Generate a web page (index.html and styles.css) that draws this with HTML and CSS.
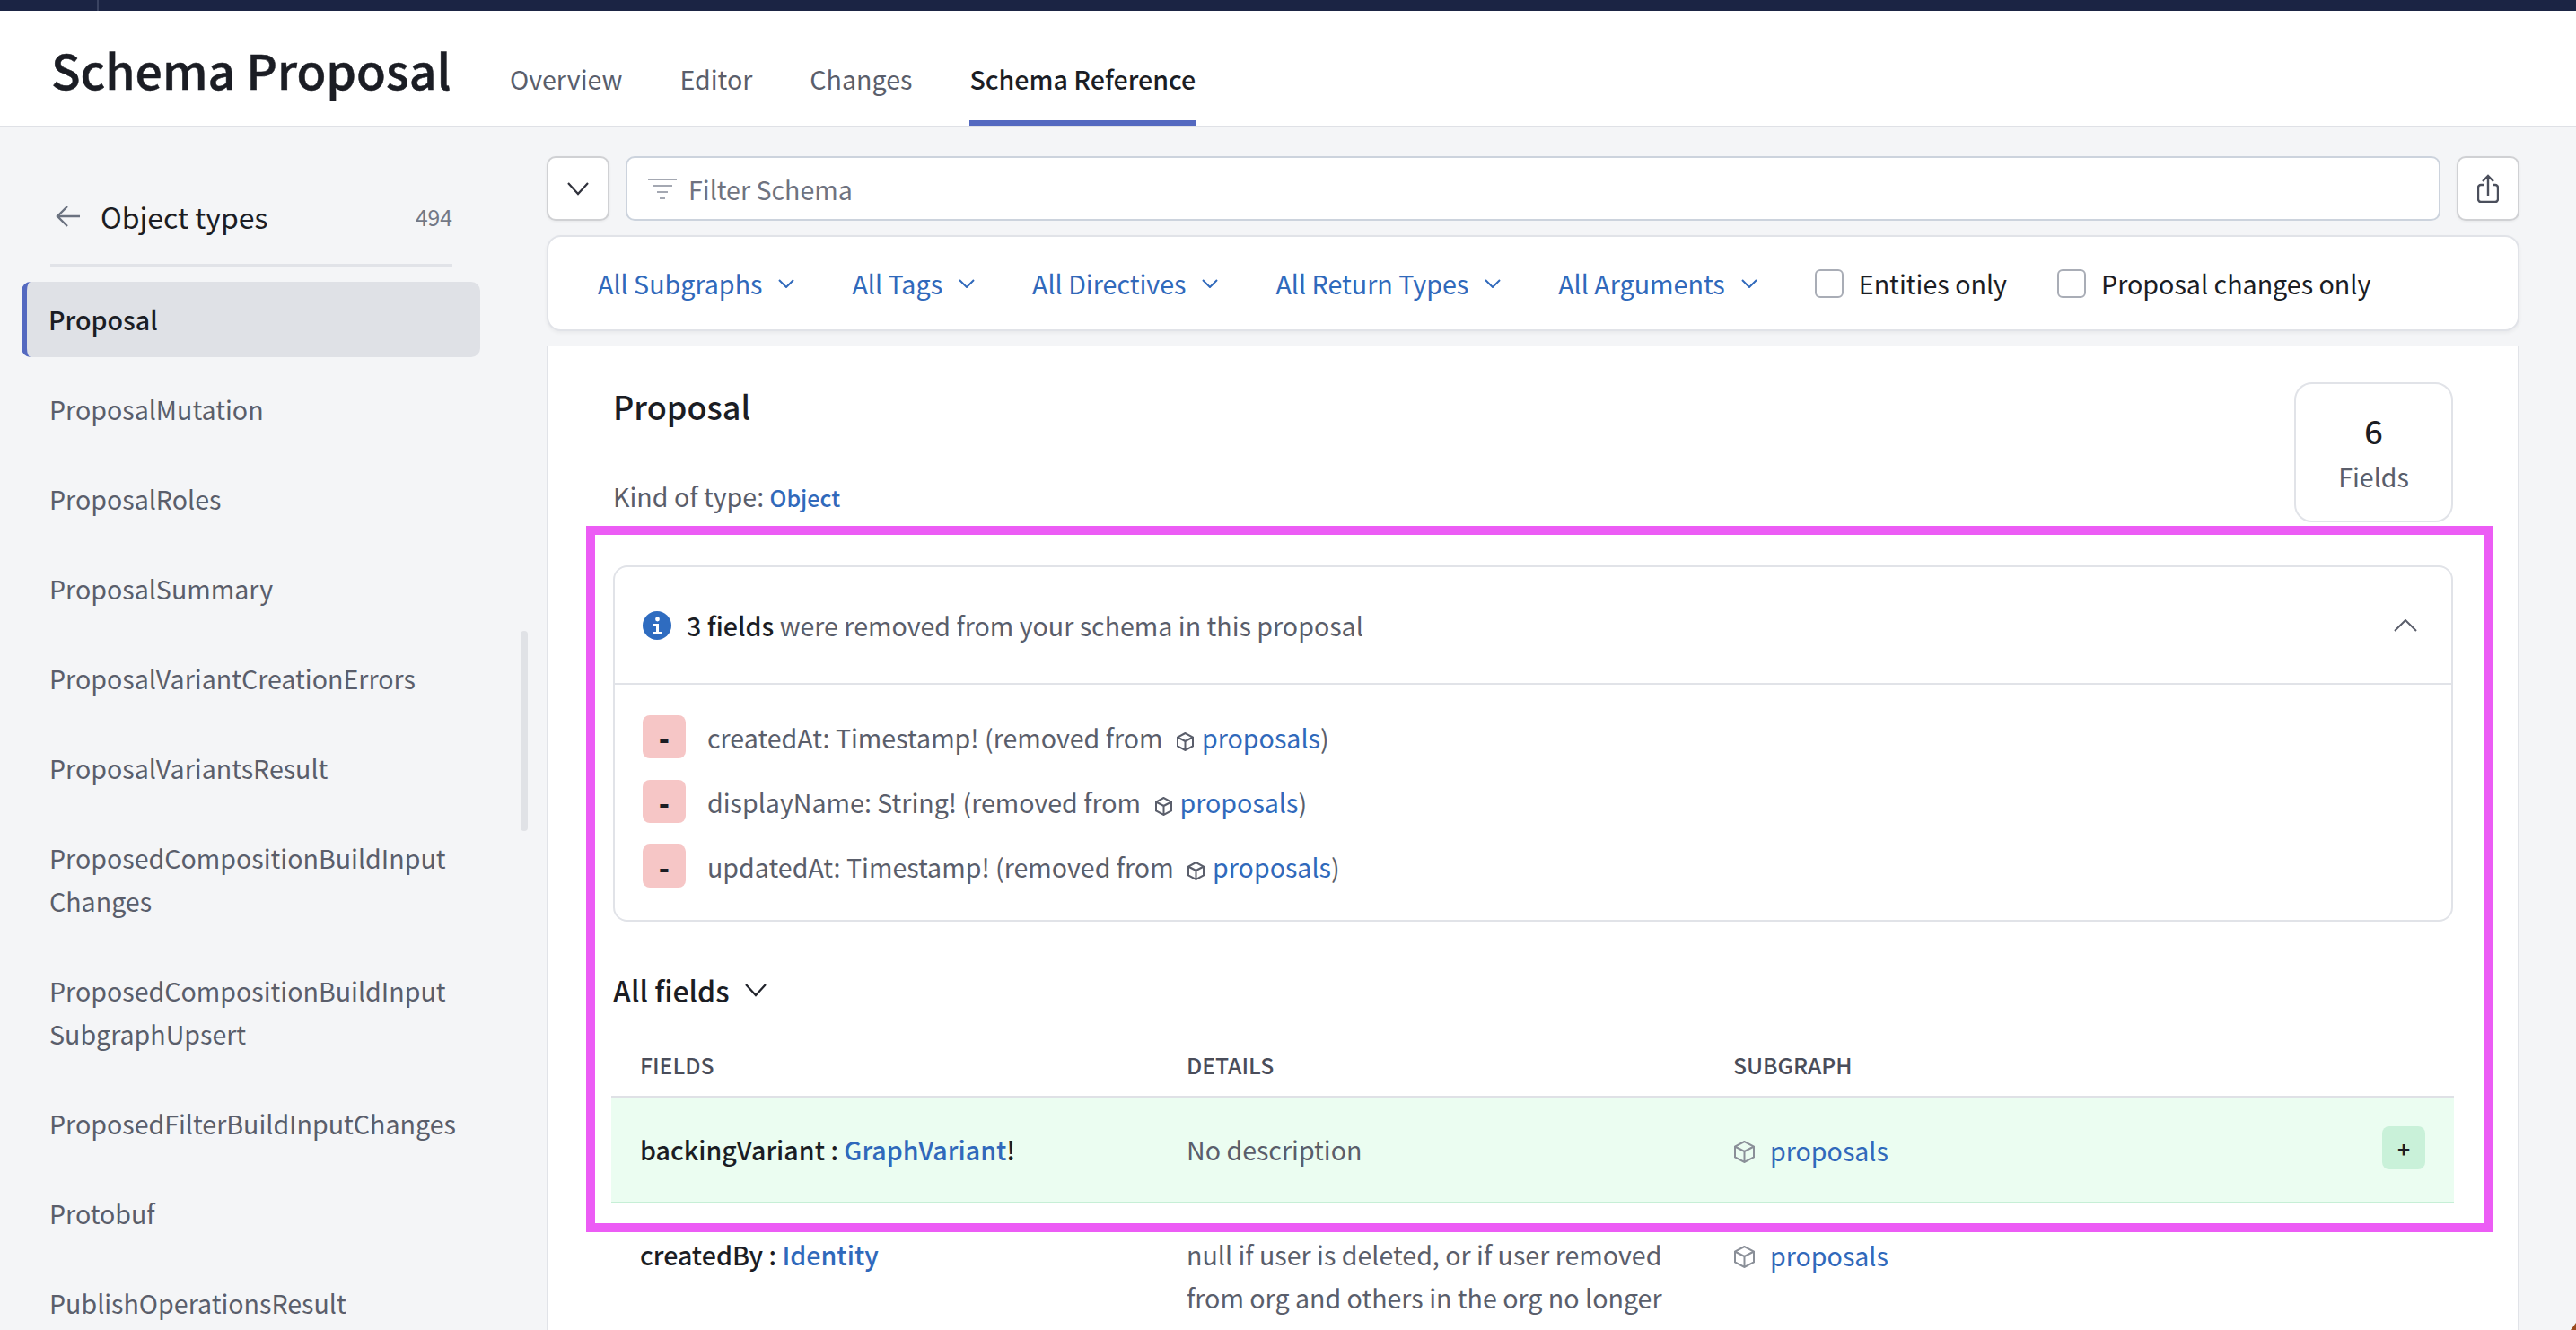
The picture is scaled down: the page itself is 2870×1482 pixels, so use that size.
FILE: index.html

```html
<!DOCTYPE html>
<html lang="en">
<head>
  <meta charset="UTF-8">
  <title>Schema Proposal</title>
  <link rel="stylesheet" href="styles.css">
</head>
<body>
<div class="top-bar"><span class="top-bar-line"></span></div>

<header class="page-header">
  <h1 class="page-title">Schema Proposal</h1>
  <nav class="tabs">
    <a class="tab">Overview</a>
    <a class="tab">Editor</a>
    <a class="tab">Changes</a>
    <a class="tab tab-active">Schema Reference</a>
  </nav>
</header>

<div class="page-body">
  <aside class="sidebar">
    <div class="sidebar-head">
      <svg class="back-arrow" viewBox="0 0 28 26" fill="none" stroke="#6b7280" stroke-width="2.4"><path d="M27 13H2M13 2 2 13l11 11"/></svg>
      <span class="sidebar-title">Object types</span>
      <span class="sidebar-count">494</span>
    </div>
    <ul class="type-list">
      <li class="type-item type-item-active">Proposal</li>
      <li class="type-item">ProposalMutation</li>
      <li class="type-item">ProposalRoles</li>
      <li class="type-item">ProposalSummary</li>
      <li class="type-item">ProposalVariantCreationErrors</li>
      <li class="type-item">ProposalVariantsResult</li>
      <li class="type-item">ProposedCompositionBuildInput<br>Changes</li>
      <li class="type-item">ProposedCompositionBuildInput<br>SubgraphUpsert</li>
      <li class="type-item">ProposedFilterBuildInputChanges</li>
      <li class="type-item">Protobuf</li>
      <li class="type-item">PublishOperationsResult</li>
    </ul>
    <div class="sidebar-scroll"></div>
  </aside>

  <main class="main">
    <div class="search-row">
      <button class="icon-btn">
        <svg width="26" height="16" viewBox="0 0 26 16" fill="none" stroke="#30323c" stroke-width="2.2"><path d="m2 2 11 12L24 2"/></svg>
      </button>
      <div class="search-box">
        <svg width="34" height="26" viewBox="0 0 34 26" fill="none" stroke="#a4a8b2" stroke-width="2.2"><path d="M1 3h32M6 10h22M11 17h12M14 24h6"/></svg>
        <span>Filter Schema</span>
      </div>
      <button class="icon-btn">
        <svg width="24" height="32" viewBox="0 0 24 32" fill="none" stroke="#4b4f5c" stroke-width="2.4"><path d="M12 24V2M6 8l6-6 6 6M7 12H4a3 3 0 0 0-3 3v13a3 3 0 0 0 3 3h16a3 3 0 0 0 3-3V15a3 3 0 0 0-3-3h-3"/></svg>
      </button>
    </div>

    <div class="filter-card">
      <a class="filter">All Subgraphs <svg class="chev" viewBox="0 0 18 10" fill="none" stroke="#3069bb" stroke-width="2"><path d="m1 1 8 8 8-8"/></svg></a>
      <a class="filter">All Tags <svg class="chev" viewBox="0 0 18 10" fill="none" stroke="#3069bb" stroke-width="2"><path d="m1 1 8 8 8-8"/></svg></a>
      <a class="filter">All Directives <svg class="chev" viewBox="0 0 18 10" fill="none" stroke="#3069bb" stroke-width="2"><path d="m1 1 8 8 8-8"/></svg></a>
      <a class="filter">All Return Types <svg class="chev" viewBox="0 0 18 10" fill="none" stroke="#3069bb" stroke-width="2"><path d="m1 1 8 8 8-8"/></svg></a>
      <a class="filter">All Arguments <svg class="chev" viewBox="0 0 18 10" fill="none" stroke="#3069bb" stroke-width="2"><path d="m1 1 8 8 8-8"/></svg></a>
      <label class="check"><span class="check-box"></span>Entities only</label>
      <label class="check"><span class="check-box"></span>Proposal changes only</label>
    </div>

    <section class="content-card">
      <div class="type-head">
        <div>
          <h2 class="type-name">Proposal</h2>
          <p class="type-kind">Kind of type: <a class="type-kind-link">Object</a></p>
        </div>
        <div class="stat-box">
          <strong class="stat-num">6</strong>
          <span class="stat-label">Fields</span>
        </div>
      </div>

      <div class="notice">
        <div class="notice-head">
          <svg class="info-icon" viewBox="0 0 32 32"><circle cx="16" cy="16" r="16" fill="#2f6cc0"/><circle cx="16.500" cy="9" r="2.400" fill="#fff"/><path d="M12 14h6v9h3v2.500H11V23h4v-6.500h-3z" fill="#fff"/></svg>
          <span class="notice-text"><b>3 fields</b> were removed from your schema in this proposal</span>
          <svg class="notice-toggle" viewBox="0 0 26 14" fill="none" stroke="#5a5e6b" stroke-width="2"><path d="M1 13 13 1l12 12"/></svg>
        </div>
        <ul class="removed-list">
          <li class="removed-row"><span class="minus-badge">-</span><span>createdAt: Timestamp! (removed from <svg class="cube" viewBox="0 0 21 21" fill="none" stroke="#5a5e6b" stroke-width="2"><path d="M10.500 1 2 5.500v10l8.500 4.500 8.500-4.500v-10zM2 5.500l8.500 4.500 8.500-4.500M10.500 10v10"/></svg><a class="sub-link">proposals</a>)</span></li>
          <li class="removed-row"><span class="minus-badge">-</span><span>displayName: String! (removed from <svg class="cube" viewBox="0 0 21 21" fill="none" stroke="#5a5e6b" stroke-width="2"><path d="M10.500 1 2 5.500v10l8.500 4.500 8.500-4.500v-10zM2 5.500l8.500 4.500 8.500-4.500M10.500 10v10"/></svg><a class="sub-link">proposals</a>)</span></li>
          <li class="removed-row"><span class="minus-badge">-</span><span>updatedAt: Timestamp! (removed from <svg class="cube" viewBox="0 0 21 21" fill="none" stroke="#5a5e6b" stroke-width="2"><path d="M10.500 1 2 5.500v10l8.500 4.500 8.500-4.500v-10zM2 5.500l8.500 4.500 8.500-4.500M10.500 10v10"/></svg><a class="sub-link">proposals</a>)</span></li>
        </ul>
      </div>

      <div class="all-fields">All fields
        <svg width="26" height="16" viewBox="0 0 26 16" fill="none" stroke="#22242c" stroke-width="2.200"><path d="m2 2 11 12L24 2"/></svg>
      </div>

      <div class="field-table">
        <div class="field-row field-head">
          <div>FIELDS</div>
          <div>DETAILS</div>
          <div>SUBGRAPH</div>
        </div>
        <div class="field-row field-added">
          <div class="field-name">backingVariant : <a class="sub-link">GraphVariant</a>!</div>
          <div class="field-detail">No description</div>
          <div class="field-sub"><svg class="cube-lg" viewBox="0 0 25 25" fill="none" stroke="#8a8f98" stroke-width="2"><path d="M12.500 1 2 6.500v12L12.500 24 23 18.500v-12zM2 6.500 12.500 12 23 6.500M12.500 12v12"/></svg><a class="sub-link">proposals</a></div>
          <span class="plus-badge">+</span>
        </div>
        <div class="field-row">
          <div class="field-name">createdBy : <a class="sub-link">Identity</a></div>
          <div class="field-detail">null if user is deleted, or if user removed from org and others in the org no longer have access to this graph info</div>
          <div class="field-sub"><svg class="cube-lg" viewBox="0 0 25 25" fill="none" stroke="#8a8f98" stroke-width="2"><path d="M12.500 1 2 6.500v12L12.500 24 23 18.500v-12zM2 6.500 12.500 12 23 6.500M12.500 12v12"/></svg><a class="sub-link">proposals</a></div>
        </div>
      </div>
    </section>
  </main>
</div>

<div class="highlight"></div>
<div class="corner-mark"></div>
</body>
</html>
```

FILE: styles.css

```css
html, body {
  margin: 0;
  padding: 0;
  height: 100%;
  overflow: hidden;
  background: #f4f5f7;
  color: #1b1d24;
  font-family: 'Noto Sans CJK JP', 'Open Sans', sans-serif;
  font-size: 28.6px;
}
ul {
  list-style: none;
  margin: 0;
  padding: 0;
}
h1, h2, p {
  margin: 0;
}
a {
  color: inherit;
}

.top-bar {
  height: 12px;
  background: #1b2444;
}
.top-bar-line {
  display: block;
  width: 2px;
  height: 12px;
  margin-left: 108px;
  background: #3a4361;
}

.page-header {
  display: flex;
  align-items: stretch;
  height: 128px;
  padding-left: 57px;
  background: #fff;
  border-bottom: 2px solid #dfe1e6;
}
.page-title {
  flex: none;
  width: 511px;
  padding-top: 2px;
  font-size: 53.6px;
  font-weight: 500;
  line-height: 126px;
  white-space: nowrap;
  -webkit-text-stroke: 0.5px #1b1d24;
}
.tabs {
  display: flex;
  gap: 64px;
}
.tab {
  height: 128px;
  box-sizing: border-box;
  padding-top: 24px;
  color: #5a5e6b;
  line-height: 104px;
  white-space: nowrap;
}
.tab-active {
  color: #1b1d24;
  font-weight: 500;
  border-bottom: 6px solid #5469c0;
  border-radius: 6px 6px 0 0;
}

.page-body {
  display: flex;
}

.sidebar {
  position: relative;
  width: 609px;
  flex: none;
  padding-top: 32px;
  box-sizing: border-box;
}
.sidebar-head {
  display: flex;
  align-items: center;
  height: 124px;
  margin: 0 105px 16px 56px;
  padding-top: 14px;
  border-bottom: 4px solid #e1e3e8;
  box-sizing: border-box;
}
.back-arrow {
  width: 28px;
  height: 26px;
  margin: 0 22px 0 6px;
}
.sidebar-title {
  font-size: 32px;
  flex: 1;
}
.sidebar-count {
  color: #737886;
  font-size: 24.7px;
}
.type-list {
  display: flex;
  flex-direction: column;
  gap: 16px;
  width: 511px;
  margin-left: 24px;
}
.type-item {
  padding: 18px 10px 18px 31px;
  color: #5a5e6b;
  line-height: 48px;
  white-space: nowrap;
}
.type-item-active {
  padding-left: 24px;
  color: #1b1d24;
  font-weight: 500;
  background: #dfe1e6;
  border-left: 6px solid #5469c0;
  border-radius: 10px;
}
.sidebar-scroll {
  position: absolute;
  top: 561px;
  left: 580px;
  width: 8px;
  height: 223px;
  background: #e0e2e6;
  border-radius: 4px;
}

.main {
  width: 2198px;
  flex: none;
  padding-top: 32px;
}
.search-row {
  display: flex;
  gap: 18px;
  height: 72px;
}
.icon-btn {
  display: flex;
  align-items: center;
  justify-content: center;
  width: 70px;
  flex: none;
  padding: 0;
  background: #fff;
  border: 2px solid #d0d1d4;
  border-radius: 10px;
  box-shadow: 0 1px 3px rgba(0,0,0,0.06);
}
.search-box {
  display: flex;
  align-items: center;
  gap: 12px;
  flex: 1;
  padding: 0 22px;
  color: #6f7380;
  background: #fff;
  border: 2px solid #ccd3dd;
  border-radius: 10px;
}
.filter-card {
  display: flex;
  align-items: center;
  height: 107px;
  margin-top: 16px;
  padding-left: 55px;
  box-sizing: border-box;
  font-size: 28.65px;
  background: #fff;
  border: 2px solid #e1e3e8;
  border-radius: 16px;
  box-shadow: 0 2px 4px rgba(0,0,0,0.05);
}
.filter {
  display: flex;
  align-items: center;
  gap: 18px;
  margin-right: 64px;
  color: #3069bb;
  white-space: nowrap;
}
.chev {
  width: 18px;
  height: 10px;
}
.check {
  display: flex;
  align-items: center;
  gap: 17px;
  margin-right: 56px;
  white-space: nowrap;
}
.check-box {
  width: 32px;
  height: 32px;
  box-sizing: border-box;
  background: #fff;
  border: 2px solid #a9adb6;
  border-radius: 6px;
}

.content-card {
  height: 1100px;
  margin-top: 17px;
  padding: 40px 72px 0 72px;
  background: #fff;
  border-left: 2px solid #e1e3e8;
  border-right: 2px solid #e1e3e8;
}
.type-head {
  display: flex;
  justify-content: space-between;
  height: 204px;
}
.type-name {
  margin-top: 2px;
  font-size: 36px;
  font-weight: 500;
  line-height: 48px;
}
.type-kind {
  margin-top: 55px;
  color: #5a5e6b;
  line-height: 44px;
}
.type-kind-link {
  color: #3069bb;
  font-size: 25px;
  font-weight: 500;
}
.stat-box {
  display: flex;
  flex-direction: column;
  align-items: center;
  width: 177px;
  height: 156px;
  box-sizing: border-box;
  padding-top: 27px;
  border: 2px solid #e1e3e8;
  border-radius: 20px;
}
.stat-num {
  font-size: 36px;
  font-weight: 500;
  line-height: 48px;
}
.stat-label {
  margin-top: 6px;
  color: #5a5e6b;
  line-height: 44px;
}

.notice {
  height: 397px;
  box-sizing: border-box;
  border: 2px solid #e1e3e8;
  border-radius: 16px;
}
.notice-head {
  display: flex;
  align-items: center;
  height: 129px;
  padding: 0 31px;
  border-bottom: 2px solid #e1e3e8;
}
.info-icon {
  width: 32px;
  height: 32px;
  margin-right: 17px;
}
.notice-text {
  flex: 1;
  color: #5a5e6b;
}
.notice-text b {
  color: #1b1d24;
  font-weight: 500;
}
.notice-toggle {
  width: 26px;
  height: 14px;
  margin-right: 7px;
}
.removed-list {
  display: flex;
  flex-direction: column;
  gap: 24px;
  padding: 34px 31px 0;
}
.removed-row {
  display: flex;
  align-items: center;
  gap: 24px;
  height: 48px;
  color: #5a5e6b;
}
.minus-badge {
  display: flex;
  align-items: center;
  justify-content: center;
  width: 48px;
  height: 48px;
  color: #1b1d24;
  font-size: 32px;
  font-weight: 900;
  background: #f6c6c6;
  border-radius: 8px;
}
.cube {
  width: 21px;
  height: 21px;
  margin: 0 8px 0 8px;
  vertical-align: -3px;
}
.sub-link {
  color: #3069bb;
}

.all-fields {
  display: flex;
  align-items: center;
  gap: 16px;
  height: 48px;
  margin-top: 52px;
  font-size: 32px;
  font-weight: 500;
}
.field-table {
  margin: 30px -1px 0 -2px;
}
.field-row {
  position: relative;
  display: grid;
  grid-template-columns: 609px 609px 1fr;
  padding-left: 32px;
}
.field-head {
  height: 57px;
  padding-bottom: 7px;
  align-items: center;
  color: #4a4d5a;
  font-size: 24.7px;
  font-weight: 500;
  border-bottom: 2px solid #dfe1e6;
}
.field-added {
  height: 116px;
  align-items: center;
  background: #ebfdf1;
  border-bottom: 2px solid #c6efd6;
}
.field-name {
  font-weight: 500;
  line-height: 48px;
}
.field-detail {
  padding-right: 30px;
  color: #5a5e6b;
  line-height: 48px;
}
.field-sub {
  display: flex;
  align-items: center;
  gap: 16px;
  height: 48px;
}
.field-added + .field-row {
  padding-top: 33px;
}
.cube-lg {
  width: 25px;
  height: 25px;
  margin-top: 4px;
}
.plus-badge {
  position: absolute;
  top: 32px;
  right: 32px;
  display: flex;
  align-items: center;
  justify-content: center;
  width: 48px;
  height: 48px;
  font-size: 24px;
  font-weight: 700;
  background: #c9f1d9;
  border-radius: 8px;
}

.highlight {
  position: absolute;
  left: 653px;
  top: 586px;
  width: 2125px;
  height: 787px;
  box-sizing: border-box;
  border: 10px solid #ec5cf5;
}
.corner-mark {
  position: absolute;
  right: 0;
  bottom: 0;
  width: 6px;
  height: 8px;
  background: #9a4a1f;
  clip-path: polygon(100% 0, 100% 100%, 0 100%);
}
```
